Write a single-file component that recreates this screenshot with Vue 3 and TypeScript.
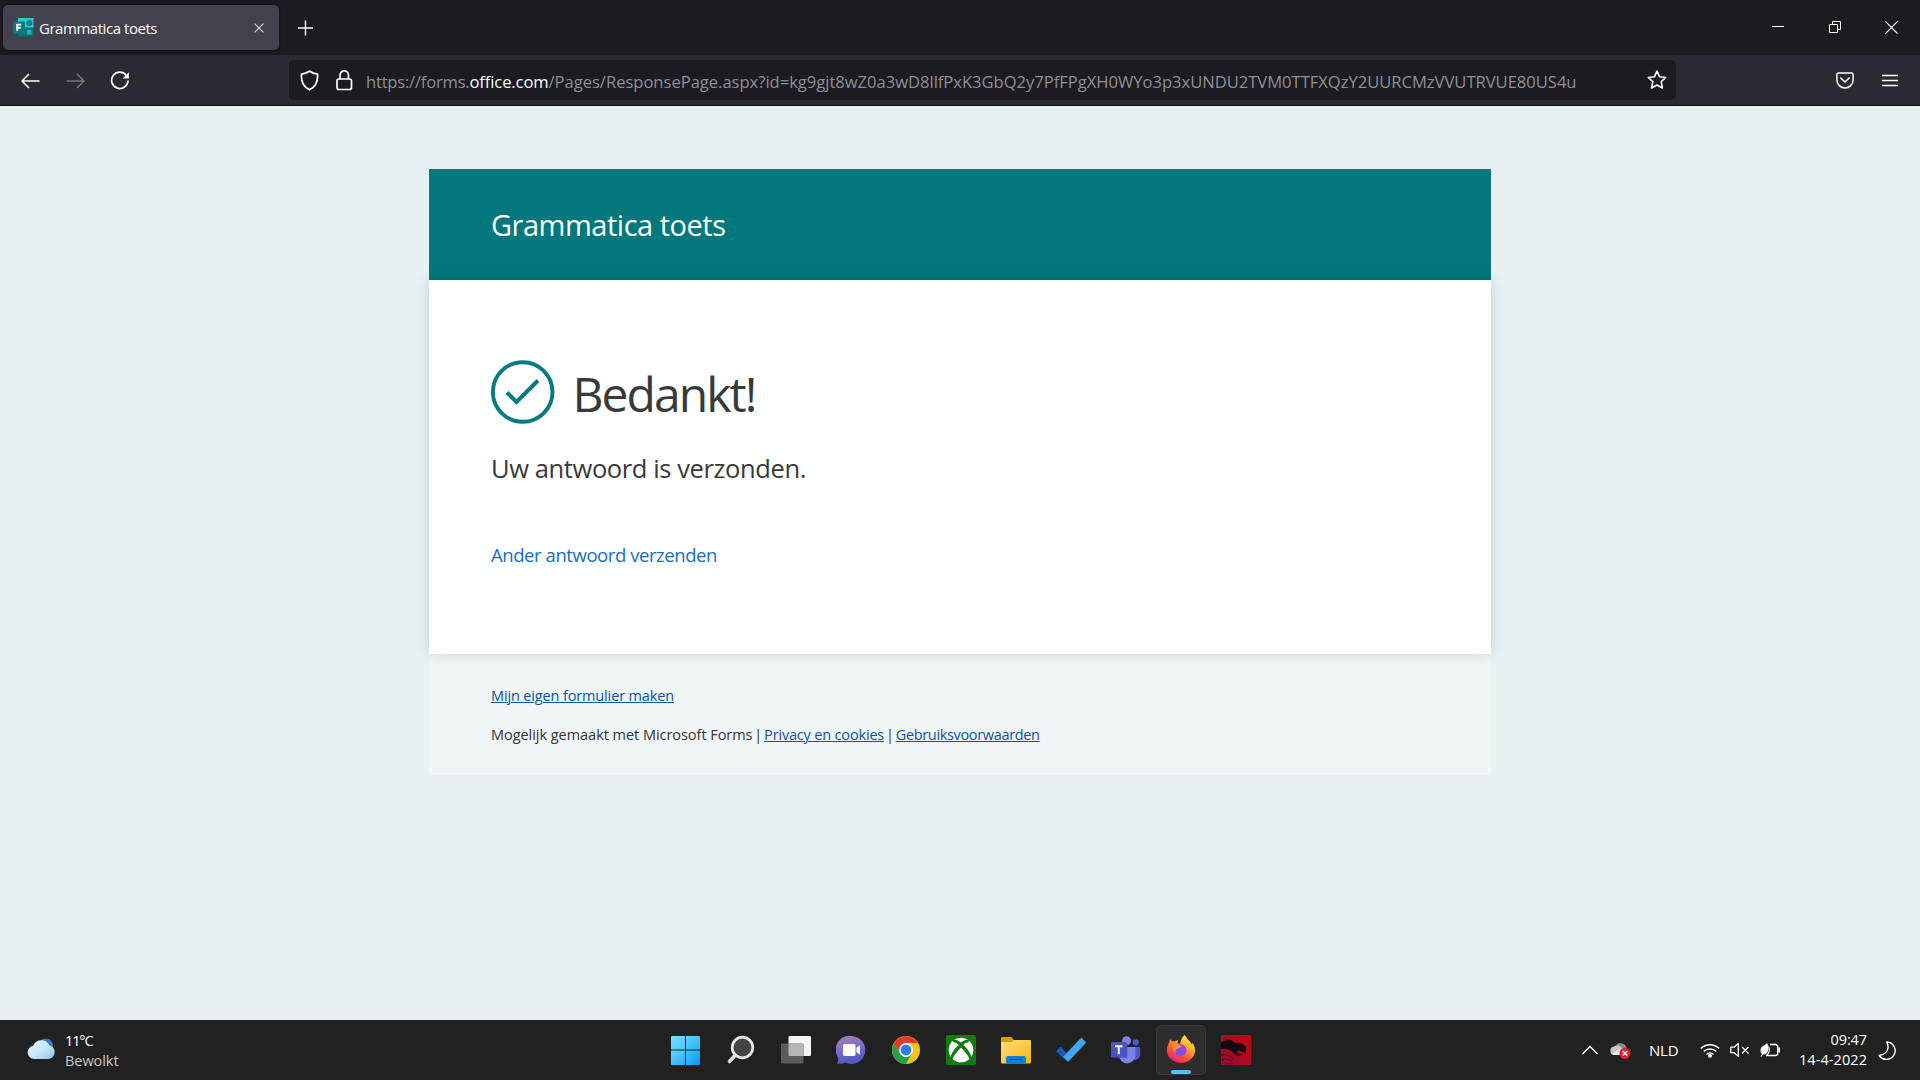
<script setup lang="ts">
import type { Directive } from 'vue'

// Spreads the letters of an element evenly so that it fills the given width.
const vFit: Directive<HTMLElement, number> = {
  mounted(el, { value }) {
    const count = (el.textContent ?? '').length
    if (!count) return
    const natural = el.getBoundingClientRect().width
    el.style.letterSpacing = `${((value - natural) / count).toFixed(4)}px`
  },
}

const urlPath =
  '/Pages/ResponsePage.aspx?id=kg9gjt8wZ0a3wD8llfPxK3GbQ2y7PfFPgXH0WYo3p3xUNDU2TVM0TTFXQzY2UURCMzVVUTRVUE80US4u'
</script>

<template>
  <div class="screen">
    <header class="tabs">
      <div class="tab">
        <svg class="favicon" width="21" height="19" viewBox="0 0 21 19">
          <rect x="5" y="0" width="15.500" height="18.500" rx="1" fill="#08727a" />
          <path d="M5 1a1 1 0 0 1 1-1h14.500v9.500H5z" fill="#36c5cd" />
          <circle cx="16.300" cy="5" r="3" fill="#057b83" />
          <rect x="14" y="12" width="4.500" height="4.500" fill="#25b0b7" />
          <rect x="0" y="3.500" width="12" height="12.500" rx="1" fill="#047b80" />
          <path d="M4.200 13V6.600h4M4.200 9.800h3.500" fill="none" stroke="#fff" stroke-width="1.900" />
        </svg>
        <span class="tab-title"><span v-fit="118" class="t">Grammatica toets</span></span>
        <svg class="tab-close" width="10" height="10" viewBox="0 0 10 10">
          <path d="M.6.6l8.800 8.800M9.400.6L.6 9.400" stroke="#d6d5db" stroke-width="1.100" />
        </svg>
      </div>
      <svg class="new-tab" width="16" height="16" viewBox="0 0 16 16">
        <path d="M7.500 .5v15M0 8h15" stroke="#fbfbfe" stroke-width="1.400" />
      </svg>
      <div class="window-buttons">
        <svg width="12" height="12" viewBox="0 0 12 12"><path d="M0 5.500h12" stroke="#fff" /></svg>
        <svg width="12" height="12" viewBox="0 0 12 12">
          <path d="M.5 3.500h8v8h-8zM3.500 3.500v-3h8v8h-3" fill="none" stroke="#fff" />
        </svg>
        <svg width="13" height="13" viewBox="0 0 13 13">
          <path d="M.4.4l12.200 12.200M12.600.4L.4 12.600" stroke="#fff" stroke-width="1.200" />
        </svg>
      </div>
    </header>

    <nav class="toolbar">
      <svg class="back" width="19" height="16" viewBox="0 0 19 16">
        <path d="M8 1L1 8l7 7M1 8h17.500" fill="none" stroke="#fbfbfe" stroke-width="1.600" stroke-linejoin="round" />
      </svg>
      <svg class="forward" width="19" height="16" viewBox="0 0 19 16">
        <path d="M11 1l7 7-7 7M18 8H.5" fill="none" stroke="#77767d" stroke-width="1.500" stroke-linejoin="round" />
      </svg>
      <svg class="reload" width="20" height="20" viewBox="0 0 20 20">
        <path d="M16.200 4.200A8.200 8.200 0 1 0 18 10" fill="none" stroke="#fbfbfe" stroke-width="1.700" stroke-linecap="round" />
        <path d="M18.900 1.200v6.200h-6.200z" fill="#fbfbfe" />
      </svg>
      <div class="urlbar">
        <svg class="shield" width="19" height="21" viewBox="0 0 19 21">
          <path d="M9.500 1.200C7.300 2.600 4.300 3.800 1.500 4.200.9 11 3.200 16.800 9.500 19.800 15.800 16.800 18.100 11 17.500 4.200 14.700 3.800 11.700 2.600 9.500 1.200z" fill="none" stroke="#fbfbfe" stroke-width="1.700" stroke-linejoin="round" />
        </svg>
        <svg class="lock" width="17" height="21" viewBox="0 0 17 21">
          <rect x="1" y="9" width="14.500" height="10.500" rx="2" fill="none" stroke="#fbfbfe" stroke-width="1.700" />
          <path d="M4 9V5.200a4.200 4.200 0 0 1 8.500 0V9" fill="none" stroke="#fbfbfe" stroke-width="1.700" />
        </svg>
        <div class="url">
          <span v-fit="103.500" class="t">https://forms.</span><span v-fit="79" class="t host">office.com</span><span v-fit="1028" class="t">{{ urlPath }}</span>
        </div>
        <svg class="star" width="20" height="20" viewBox="0 0 20 20">
          <path d="M10 1.200l2.600 5.600 6.100.7-4.500 4.200 1.200 6.300-5.400-3-5.400 3 1.200-6.300L1.300 7.500l6.100-.7z" fill="none" stroke="#fbfbfe" stroke-width="1.600" stroke-linejoin="round" />
        </svg>
      </div>
      <svg class="pocket" width="18" height="17" viewBox="0 0 18 17">
        <path d="M2.500 1h13A1.600 1.600 0 0 1 17.100 2.600V8A8.100 8 0 0 1 .9 8V2.600A1.600 1.600 0 0 1 2.500 1z" fill="none" stroke="#fbfbfe" stroke-width="1.500" />
        <path d="M4.800 6L9 10l4.200-4" fill="none" stroke="#fbfbfe" stroke-width="1.600" stroke-linecap="round" stroke-linejoin="round" />
      </svg>
      <svg class="menu" width="16" height="13" viewBox="0 0 16 13">
        <path d="M0 1.500h16M0 6.500h16M0 11.500h16" stroke="#fbfbfe" stroke-width="1.400" />
      </svg>
    </nav>

    <main class="page">
      <div class="form">
        <div class="form-head"><span v-fit="234.500" class="t">Grammatica toets</span></div>
        <section class="card">
          <div class="thanks">
            <svg width="64" height="64" viewBox="0 0 64 64">
              <circle cx="31.700" cy="32" r="29.800" fill="none" stroke="#077b80" stroke-width="3.900" />
              <path d="M16 32.500l9.500 9.500L47 20.500" fill="none" stroke="#077b80" stroke-width="4" />
            </svg>
            <h1><span v-fit="183" class="t">Bedankt!</span></h1>
          </div>
          <p class="sent"><span v-fit="315" class="t">Uw antwoord is verzonden.</span></p>
          <a class="again"><span v-fit="226" class="t">Ander antwoord verzenden</span></a>
        </section>
        <footer class="form-foot">
          <div><a><span v-fit="183" class="t">Mijn eigen formulier maken</span></a></div>
          <div class="legal">
            <span v-fit="261.500" class="t">Mogelijk gemaakt met Microsoft Forms</span>
            <i>|</i>
            <a><span v-fit="120" class="t">Privacy en cookies</span></a>
            <i>|</i>
            <a><span v-fit="144" class="t">Gebruiksvoorwaarden</span></a>
          </div>
        </footer>
      </div>
    </main>

    <footer class="taskbar">
      <div class="weather">
        <svg width="28" height="22" viewBox="0 0 28 22">
          <defs>
            <linearGradient id="cl" x1="0" y1="0" x2="1" y2="1">
              <stop offset="0" stop-color="#e4f4fd" /><stop offset=".55" stop-color="#c4e6fa" /><stop offset="1" stop-color="#86bfec" />
            </linearGradient>
          </defs>
          <path d="M14 2a7.500 7.500 0 0 1 12 5v5H14z" fill="#3177c4" />
          <path d="M7 21a6.700 6.700 0 0 1-.8-13.300A9 9 0 0 1 22.500 7.400 6.900 6.900 0 0 1 21 21z" fill="url(#cl)" />
        </svg>
        <div class="weather-text">
          <div class="temp"><span v-fit="27.500" class="t">11°C</span></div>
          <div><span v-fit="53.500" class="t">Bewolkt</span></div>
        </div>
      </div>

      <div class="apps">
        <div class="app">
          <svg width="30" height="30" viewBox="0 0 30 30">
            <defs>
              <linearGradient id="wn" x1="0" y1="0" x2="1" y2="1">
                <stop offset="0" stop-color="#7fdcff" /><stop offset=".5" stop-color="#46c3fc" /><stop offset="1" stop-color="#0c94fb" />
              </linearGradient>
            </defs>
            <path d="M1 1H14V14.500H0V2a1 1 0 0 1 1-1zM15 1H28a1 1 0 0 1 1 1V14.500H15zM0 15.500H14V30H1a1 1 0 0 1-1-1zM15 15.500H29V29a1 1 0 0 1-1 1H15z" fill="url(#wn)" />
          </svg>
        </div>
        <div class="app">
          <svg width="30" height="30" viewBox="0 0 30 30">
            <path d="M9 20.500L3.500 26.500" stroke="#dcdfe1" stroke-width="3.600" stroke-linecap="round" />
            <circle cx="16.500" cy="12.500" r="10.300" fill="#434343" stroke="#e3e6e7" stroke-width="2.700" />
          </svg>
        </div>
        <div class="app">
          <svg width="30" height="30" viewBox="0 0 30 30">
            <rect x="7.500" y="1" width="22.500" height="20" rx="1" fill="#f4f4f4" />
            <rect x="0" y="8.500" width="22.500" height="20" rx="1" fill="#5b5b5b" />
            <path d="M7.500 8.500h14a1 1 0 0 1 1 1V21h-14a1 1 0 0 1-1-1z" fill="#b5b5b5" />
          </svg>
        </div>
        <div class="app">
          <svg width="30" height="30" viewBox="0 0 30 30">
            <defs>
              <linearGradient id="ch" x1=".1" y1="0" x2=".4" y2="1">
                <stop offset="0" stop-color="#b77ba9" /><stop offset=".4" stop-color="#7d74c6" /><stop offset="1" stop-color="#5457c7" />
              </linearGradient>
            </defs>
            <path d="M15.500 1a14 14 0 1 1-6.500 26.500c-2.500 1.300-5 1.500-8 1.300 1.200-2 1.600-4 1.200-6A14 14 0 0 1 15.500 1z" fill="url(#ch)" />
            <rect x="7" y="9" width="12.500" height="12" rx="1.800" fill="#fff" />
            <path d="M20.500 12.800l3.500-2.600v9.600l-3.500-2.600z" fill="#fff" />
          </svg>
        </div>
        <div class="app">
          <svg width="30" height="30" viewBox="0 0 30 30">
            <circle cx="15" cy="15" r="14" fill="#fbc116" />
            <path d="M15 15L9 18.500 2.900 8A14 14 0 0 1 27.100 8H15z" fill="#e33b2e" />
            <path d="M2.900 8L9 18.500 15 22 21 18.500 15 29A14 14 0 0 1 2.900 8z" fill="#24a148" />
            <circle cx="15" cy="15" r="6.900" fill="#fff" />
            <circle cx="15" cy="15" r="5.400" fill="#2b7de9" />
          </svg>
        </div>
        <div class="app">
          <svg width="30" height="30" viewBox="0 0 30 30">
            <rect width="30" height="30" rx="2.500" fill="#107c10" />
            <circle cx="15" cy="15" r="12.300" fill="#fff" />
            <path d="M5.500 4.500C9 4 12 5.300 15 7.500 18 5.300 21 4 24.500 4.500L22 7.500C20 7.300 18.500 8.500 17.300 10 22 14 26 20 25.500 25L24 25C22 20 18 15.500 15 12.800 12 15.500 8 20 6 25L4.500 25C4 20 8 14 12.700 10 11.500 8.500 10 7.300 8 7.500z" fill="#107c10" />
          </svg>
        </div>
        <div class="app">
          <svg width="30" height="30" viewBox="0 0 30 30">
            <defs>
              <linearGradient id="fo" x1="0" y1="0" x2="1" y2="1">
                <stop offset="0" stop-color="#ffe07b" /><stop offset="1" stop-color="#fbb70c" />
              </linearGradient>
            </defs>
            <path d="M0 3a1 1 0 0 1 1-1h9.500l2.500 3.200H29a1 1 0 0 1 1 1V9H0z" fill="#dc9b08" />
            <path d="M0 7h10.500l2.500-2H29a1 1 0 0 1 1 1v21.500a1 1 0 0 1-1 1H1a1 1 0 0 1-1-1z" fill="url(#fo)" />
            <path d="M5 28.500V23a2 2 0 0 1 2-2h16a2 2 0 0 1 2 2v5.500z" fill="#137fd1" />
            <path d="M8.500 24.500h13" stroke="#08518f" stroke-width="1.200" />
          </svg>
        </div>
        <div class="app">
          <svg width="30" height="30" viewBox="0 0 30 30">
            <path d="M4.500 11.800l7.300 7.300-4.500 4.500L0 16.300z" fill="#185abd" />
            <path d="M25.300 2.500l5 5L12 27l-5-5z" fill="#41a5ee" />
          </svg>
        </div>
        <div class="app">
          <svg width="30" height="30" viewBox="0 0 30 30">
            <circle cx="24.700" cy="7.300" r="3.100" fill="#5059c9" />
            <path d="M19 12h9a1.200 1.200 0 0 1 1.200 1.200v5.500a6 6 0 0 1-10.200 4.500z" fill="#5059c9" />
            <circle cx="15.500" cy="5.700" r="4.500" fill="#7b83eb" />
            <path d="M8 12h15.200a1.200 1.200 0 0 1 1.200 1.200v7a8 8 0 0 1-16.400 0z" fill="#7b83eb" />
            <path d="M10 8h6.500v14.500H9z" fill="#3f459f" opacity=".6" />
            <rect x="0" y="7" width="15.500" height="15.500" rx="1.300" fill="#4b53bc" />
            <path d="M4 11.200h7.500M7.750 11.200v8" stroke="#fff" stroke-width="1.900" />
          </svg>
        </div>
        <div class="app active">
          <svg width="30" height="30" viewBox="0 0 30 30">
            <defs>
              <linearGradient id="ff" x1=".85" y1="0" x2=".25" y2="1">
                <stop offset="0" stop-color="#fff04a" /><stop offset=".35" stop-color="#ffb52b" /><stop offset=".65" stop-color="#ff5a36" /><stop offset="1" stop-color="#e3157f" />
              </linearGradient>
              <linearGradient id="fp" x1=".8" y1="0" x2=".2" y2="1">
                <stop offset="0" stop-color="#b23ce9" /><stop offset="1" stop-color="#5c5ae0" />
              </linearGradient>
            </defs>
            <path d="M18.500 0c1.500 1.300 2.200 3 3.500 4.800 1.800 1.500 3 2.800 3.700 4.700l.8-1.500c1.700 2.300 2.600 5 2.600 8A14.200 13.200 0 0 1 .8 16c0-3.500.9-6.500 2.700-9V5.500L5 4.200l.7 2.300c1-.3 2-.3 3 0L12 5l-.5 3.300 2.500.6C15 5 16 2 18.500 0z" fill="url(#ff)" />
            <circle cx="14.500" cy="15" r="6" fill="url(#fp)" />
            <path d="M8 8.500c1.500 1 3.500 1.200 5.500 1.200l2 1.800c-1.500 1.500-3 2-4.500 2.300C9.500 14.500 9 16 9.500 18c-3-2-4-6-1.500-9.500z" fill="#ff8b2e" />
          </svg>
          <div class="indicator"></div>
        </div>
        <div class="app">
          <svg width="30" height="30" viewBox="0 0 30 30">
            <defs>
              <linearGradient id="rd" x1="1" y1="0" x2="0" y2="1">
                <stop offset="0" stop-color="#c50413" /><stop offset=".6" stop-color="#a90a1e" /><stop offset="1" stop-color="#970a3a" />
              </linearGradient>
            </defs>
            <rect width="30" height="30" fill="url(#rd)" />
            <path d="M0 7.500c3-2 6-3 9-1.500L4 4.500c4-.8 7 .5 9.500 3 2 .5 3 .8 4.500.7 2-.5 3.500.3 5 1.800 2 1 2 2.500 1.800 4l.2 3-1 2-1.300-2.200-1 1-1.500-2-1.200 1.200-1.500-1.700-2 1.400 1.500 1.800 3.500.5 1 1.200-6 .2-3-2.300C9 15 5 13 0 14z" fill="#170911" />
            <path d="M0 20.500c5-1.500 9 0 12 3M1 25c4-2 7-1 10 1.500M4 29c3-1 5-1 8 0" fill="none" stroke="#5a0a2a" stroke-width="1.200" />
          </svg>
        </div>
      </div>

      <div class="tray">
        <svg class="chevron" width="16" height="10" viewBox="0 0 16 10">
          <path d="M.5 9L8 1.500 15.500 9" fill="none" stroke="#fff" stroke-width="1.300" />
        </svg>
        <svg class="cloud" width="21" height="19" viewBox="0 0 21 19">
          <path d="M5 6a6 6 0 0 1 11.500 1L17 12H8z" fill="#8b8b8b" />
          <path d="M4 14a4.300 4.300 0 0 1 0-8.500c3-2 7-.5 8.500 2.500l5 6z" fill="#c6c6c6" />
          <path d="M1.500 13l9-5 4 6H4z" fill="#eee" />
          <circle cx="15" cy="12.300" r="5.600" fill="#e0202f" />
          <path d="M12.800 10.100l4.400 4.400M17.200 10.100l-4.400 4.400" stroke="#fff" stroke-width="1.400" />
        </svg>
        <div class="lang"><span v-fit="29.500" class="t">NLD</span></div>
        <svg class="wifi" width="20" height="16" viewBox="0 0 20 16">
          <path d="M.8 6.500a13 13 0 0 1 18.400 0M3.700 9.500a9 9 0 0 1 12.600 0M6.500 12.400a5 5 0 0 1 7 0" fill="none" stroke="#fff" stroke-width="1.400" />
          <circle cx="10" cy="13.800" r="2" fill="#fff" />
        </svg>
        <svg class="speaker" width="20" height="16" viewBox="0 0 20 16">
          <path d="M.8 5.200H4L8.300 1.500v12.800L4 10.700H.8z" fill="none" stroke="#fff" stroke-width="1.300" stroke-linejoin="round" />
          <path d="M12 5l6.500 6.500M18.500 5L12 11.500" stroke="#fff" stroke-width="1.300" />
        </svg>
        <svg class="battery" width="21" height="16" viewBox="0 0 21 16">
          <path d="M10 2.500h5.500A2.200 2.200 0 0 1 17.700 4.700v6.600a2.200 2.200 0 0 1-2.200 2.200H6" fill="none" stroke="#fff" stroke-width="1.400" />
          <path d="M18.300 5.500h1.700v5h-1.700z" fill="#fff" />
          <path d="M7 .8c1.500 3 1.800 6 .8 8.700C6.900 11.800 4.500 13 2.800 12.400L1.200 15l-.7-.7L2 12C.2 10.600 0 8 1.200 5.800 2.500 3.500 5.500 3.500 7 .8z" fill="#fff" />
          <path d="M8.500 4.500c1.800 3 .8 7-2 8.500" fill="none" stroke="#fff" stroke-width="1.200" />
        </svg>
        <div class="clock">
          <div><span v-fit="36.500" class="t">09:47</span></div>
          <div><span v-fit="68" class="t">14-4-2022</span></div>
        </div>
        <svg class="moon" width="18" height="19" viewBox="0 0 18 19">
          <path d="M8.800 1a8.700 8.700 0 1 1-7.600 13.500c4.500-.8 8.300-3.500 8.800-7.500.2-2-.3-4-1.200-6z" fill="none" stroke="#fff" stroke-width="1.400" stroke-linejoin="round" />
        </svg>
      </div>
    </footer>
  </div>
</template>

<style>
body {
  margin: 0;
  overflow: hidden;
}
</style>

<style scoped>
.screen {
  width: 1920px;
  height: 1080px;
  display: flex;
  flex-direction: column;
  font-family: 'Open Sans', 'Noto Sans', sans-serif;
  font-size: 15px;
  overflow: hidden;
}
svg {
  display: block;
  flex: none;
}
.t {
  display: inline-block;
  white-space: pre;
}

/* Browser chrome */
.tabs {
  flex: none;
  height: 55px;
  background: #1c1b22;
  display: flex;
  align-items: center;
}
.tab {
  width: 276px;
  height: 45px;
  margin-left: 3px;
  box-sizing: border-box;
  padding: 0 15px 0 10px;
  border-radius: 5px;
  background: #42414d;
  box-shadow: 0 0 4px rgba(0, 0, 0, 0.4);
  display: flex;
  align-items: center;
}
.tab-title {
  margin-left: 5px;
  line-height: 20px;
  padding-top: 1px;
  color: #fbfbfe;
}
.tab-close {
  margin-left: auto;
}
.new-tab {
  margin-left: 19px;
}
.window-buttons {
  margin-left: auto;
  margin-right: 22px;
  display: flex;
  align-items: center;
  gap: 44.500px;
  padding-bottom: 1px;
}
.toolbar {
  flex: none;
  height: 51px;
  box-sizing: border-box;
  background: #2b2a33;
  border-bottom: 1px solid #0c0c0d;
  display: flex;
  align-items: center;
}
.back {
  margin-left: 20.500px;
  margin-top: 1px;
}
.forward {
  margin-left: 26px;
  margin-top: 1px;
}
.reload {
  margin-left: 25.500px;
  margin-top: 2px;
}
.urlbar {
  width: 1387px;
  height: 40px;
  margin-left: 159px;
  border-radius: 5px;
  background: #1c1b22;
  display: flex;
  align-items: center;
}
.shield {
  margin-left: 10.500px;
}
.lock {
  margin-left: 17.500px;
}
.url {
  margin-left: 13px;
  height: 24px;
  line-height: 24px;
  padding-top: 3px;
  font-size: 16.600px;
  color: #8f8f96;
  display: flex;
  width: 1211px;
}
.host {
  color: #fbfbfe;
}
.star {
  margin-left: 70px;
}
.pocket {
  margin-left: 160px;
}
.menu {
  margin-left: 28px;
}

/* Form page */
.page {
  flex: 1;
  background: #e7f0f3;
  padding-top: 63px;
}
.form {
  width: 1062px;
  margin: 0 auto;
}
.form-head {
  height: 111px;
  box-sizing: border-box;
  padding: 36px 62px 0;
  line-height: 40px;
  font-size: 29px;
  color: #fff;
  background: #03787c;
}
.card {
  position: relative;
  height: 374px;
  box-sizing: border-box;
  padding: 80px 62px 0;
  background: #fdfefe;
  box-shadow: 0 0 13px rgba(0, 30, 40, 0.14);
  color: #393939;
}
.thanks {
  display: flex;
  height: 64px;
}
h1 {
  margin: 2px 0 0 17.500px;
  font-size: 48px;
  font-weight: 400;
  line-height: 64px;
}
.sent {
  margin: 27px 0 0;
  font-size: 25.500px;
  line-height: 34px;
}
.again {
  display: block;
  margin-top: 57px;
  font-size: 18.500px;
  line-height: 26px;
  color: #1a6fc0;
}
.form-foot {
  height: 121px;
  box-sizing: border-box;
  padding: 32px 62px 0;
  background: #f0f5f8;
  color: #333;
  line-height: 20px;
  font-size: 14.500px;
}
.form-foot a {
  color: #0f52a5;
}
.form-foot a .t {
  text-decoration: underline;
  text-decoration-thickness: 1px;
  text-underline-offset: 1px;
}
.legal {
  display: flex;
  margin-top: 19px;
}
.legal i {
  width: 11.600px;
  text-align: center;
  font-style: normal;
}

/* Taskbar */
.taskbar {
  flex: none;
  height: 60px;
  background: #212121;
  color: #fff;
  display: flex;
}
.weather {
  width: 631px;
  padding-left: 27px;
  display: flex;
}
.weather > svg {
  margin-top: 18px;
}
.weather-text {
  margin: 11px 0 0 10px;
  line-height: 20px;
  font-size: 14.500px;
  color: #c9c9c9;
}
.temp {
  color: #fff;
}
.apps {
  display: flex;
  width: 605px;
}
.app {
  width: 55px;
  height: 60px;
  display: flex;
  align-items: center;
  justify-content: center;
}
.app.active {
  position: relative;
  width: 50px;
  height: 50px;
  margin: 5px 2px 0 3px;
  box-sizing: border-box;
  border: 1px solid #3a3a3a;
  border-radius: 5px;
  background: #2d2d2d;
}
.indicator {
  position: absolute;
  left: 14px;
  bottom: 0;
  width: 20px;
  height: 4px;
  border-radius: 2px;
  background: #4cc2ff;
}
.tray {
  margin-left: auto;
  margin-right: 24px;
  display: flex;
  align-items: center;
}
.cloud {
  margin-left: 12px;
  margin-top: 1px;
}
.lang {
  margin-left: 18px;
  width: 30px;
  line-height: 20px;
}
.wifi {
  margin-left: 21px;
}
.speaker {
  margin-left: 10px;
}
.battery {
  margin-left: 10px;
}
.clock {
  margin-left: 18px;
  width: 68px;
  text-align: right;
  line-height: 20px;
  font-size: 14.500px;
  padding-bottom: 1px;
}
.moon {
  margin-left: 11px;
}
</style>
